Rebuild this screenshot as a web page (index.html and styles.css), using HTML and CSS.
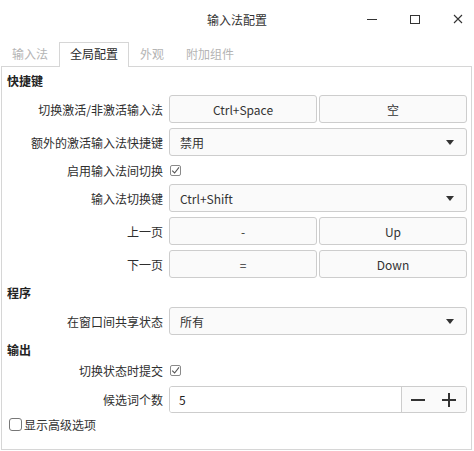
FILE: index.html
```html
<!DOCTYPE html>
<html lang="zh-CN">
<head>
<meta charset="utf-8">
<title>输入法配置</title>
<link rel="stylesheet" href="styles.css">
</head>
<body>
<div class="window">
  <div class="titlebar">
    <div class="title">输入法配置</div>
    <div class="controls">
      <span class="ctl"><svg width="12" height="12" viewBox="0 0 12 12"><line x1="1" y1="6.5" x2="11" y2="6.5" stroke="#333" stroke-width="1"/></svg></span>
      <span class="ctl"><svg width="12" height="12" viewBox="0 0 12 12"><rect x="1.5" y="2.5" width="9" height="8" fill="none" stroke="#333" stroke-width="1"/></svg></span>
      <span class="ctl"><svg width="12" height="12" viewBox="0 0 12 12"><path d="M2 2 L10 10 M10 2 L2 10" stroke="#333" stroke-width="1.1"/></svg></span>
    </div>
  </div>
  <div class="tabs">
    <div class="tab">输入法</div>
    <div class="tab active">全局配置</div>
    <div class="tab">外观</div>
    <div class="tab">附加组件</div>
  </div>
  <div class="panel">
    <div class="section">快捷键</div>
    <div class="row">
      <div class="label">切换激活/非激活输入法</div>
      <div class="ctrl pair">
        <div class="btn">Ctrl+Space</div>
        <div class="btn">空</div>
      </div>
    </div>
    <div class="row">
      <div class="label">额外的激活输入法快捷键</div>
      <div class="ctrl"><div class="combo"><span>禁用</span><span class="arrow"></span></div></div>
    </div>
    <div class="row check-row">
      <div class="label">启用输入法间切换</div>
      <div class="ctrl"><span class="check checked"><svg width="9" height="9" viewBox="0 0 9 9"><path d="M1.2 4.6 L3.6 7 L8 1.4" fill="none" stroke="#555" stroke-width="1.1"/></svg></span></div>
    </div>
    <div class="row">
      <div class="label">输入法切换键</div>
      <div class="ctrl"><div class="combo"><span>Ctrl+Shift</span><span class="arrow"></span></div></div>
    </div>
    <div class="row">
      <div class="label">上一页</div>
      <div class="ctrl pair">
        <div class="btn">-</div>
        <div class="btn">Up</div>
      </div>
    </div>
    <div class="row">
      <div class="label">下一页</div>
      <div class="ctrl pair">
        <div class="btn">=</div>
        <div class="btn">Down</div>
      </div>
    </div>
    <div class="section">程序</div>
    <div class="row">
      <div class="label">在窗口间共享状态</div>
      <div class="ctrl"><div class="combo"><span>所有</span><span class="arrow"></span></div></div>
    </div>
    <div class="section">输出</div>
    <div class="row check-row tight">
      <div class="label">切换状态时提交</div>
      <div class="ctrl"><span class="check checked"><svg width="9" height="9" viewBox="0 0 9 9"><path d="M1.2 4.6 L3.6 7 L8 1.4" fill="none" stroke="#555" stroke-width="1.1"/></svg></span></div>
    </div>
    <div class="row spin-row">
      <div class="label">候选词个数</div>
      <div class="ctrl">
        <div class="spin">
          <div class="spin-value">5</div>
          <div class="spin-btns">
            <svg width="14" height="14" viewBox="0 0 14 14"><line x1="0" y1="7" x2="14" y2="7" stroke="#333" stroke-width="2"/></svg>
            <svg width="14" height="14" viewBox="0 0 14 14"><line x1="0" y1="7" x2="14" y2="7" stroke="#333" stroke-width="2"/><line x1="7" y1="0" x2="7" y2="14" stroke="#333" stroke-width="2"/></svg>
          </div>
        </div>
      </div>
    </div>
    <div class="advanced">
      <span class="check big"></span>
      <span>显示高级选项</span>
    </div>
  </div>
</div>
</body>
</html>
```

FILE: styles.css
```css
* { box-sizing: border-box; }
html, body {
  margin: 0;
  padding: 0;
  background: #ffffff;
}
body {
  font-family: "Noto Sans CJK SC", "Noto Sans", sans-serif;
  font-size: 12px;
  color: #333333;
  width: 474px;
  height: 451px;
  overflow: hidden;
}
.window {
  width: 474px;
  height: 451px;
  display: flex;
  flex-direction: column;
}
.titlebar {
  height: 42px;
  display: flex;
  align-items: center;
  justify-content: center;
  position: relative;
}
.title {
  font-size: 12px;
  color: #333;
  line-height: 16px;
  margin-top: -2px;
}
.controls {
  position: absolute;
  right: 10px;
  top: 13px;
  display: flex;
  gap: 31px;
}
.ctl {
  width: 12px;
  height: 12px;
  display: block;
}
.ctl svg { display: block; }
.tabs {
  height: 24px;
  display: flex;
  padding-left: 1px;
  position: relative;
  z-index: 1;
}
.tab {
  padding: 0 10px;
  color: #b4b4b4;
  border: 1px solid transparent;
  border-bottom: none;
  height: 25px;
  line-height: 22px;
}
.tab.active {
  color: #2b2b2b;
  background: #ffffff;
  border-color: #d6d6d6;
}
.panel {
  margin-left: 1px;
  width: 471px;
  height: 384px;
  border: 1px solid #d6d6d6;
  padding: 4px 4px 0 5px;
  display: flex;
  flex-direction: column;
  gap: 5px;
}
.section {
  font-weight: bold;
  height: 19px;
  line-height: 19px;
  color: #222;
}
.row {
  display: flex;
  align-items: center;
  height: 28px;
}
.row.check-row { height: 18px; }
.row.check-row.tight { margin-top: -3px; }
.row.spin-row { height: 27px; margin-top: 2px; }
.label {
  width: 156px;
  text-align: right;
  flex: none;
  color: #2e2e2e;
}
.ctrl {
  margin-left: 6px;
  flex: 1;
  height: 100%;
  display: flex;
  align-items: center;
}
.pair { gap: 2px; }
.btn {
  flex: 1;
  height: 28px;
  border: 1px solid #cdcdcd;
  border-radius: 3px;
  background: #fafafa;
  display: flex;
  align-items: center;
  justify-content: center;
  color: #333;
}
.combo {
  width: 100%;
  height: 28px;
  border: 1px solid #cdcdcd;
  border-radius: 3px;
  background: #fafafa;
  display: flex;
  align-items: center;
  justify-content: space-between;
  padding: 0 12px 0 10px;
}
.arrow {
  width: 0;
  height: 0;
  border-left: 4px solid transparent;
  border-right: 4px solid transparent;
  border-top: 5px solid #333;
}
.check {
  width: 11px;
  height: 11px;
  border: 1px solid #8a8a8a;
  border-radius: 2px;
  display: flex;
  align-items: center;
  justify-content: center;
  background: #fff;
  margin-left: 1px;
}
.check svg { display: block; }
.spin {
  width: 100%;
  height: 27px;
  border: 1px solid #cdcdcd;
  border-radius: 3px;
  display: flex;
  overflow: hidden;
}
.spin-value {
  flex: 1;
  background: #fff;
  display: flex;
  align-items: center;
  padding-left: 9px;
  color: #222;
}
.spin-btns {
  width: 65px;
  background: #fafafa;
  border-left: 1px solid #cdcdcd;
  display: flex;
  align-items: center;
  justify-content: space-between;
  padding: 0 10px 0 9px;
}
.spin-btns svg { display: block; }
.advanced {
  display: flex;
  align-items: center;
  gap: 2px;
  height: 13px;
  margin-left: 2px;
}
.check.big {
  width: 13px;
  height: 13px;
  border-radius: 3px;
  border-color: #777;
  margin-left: 0;
}
```
